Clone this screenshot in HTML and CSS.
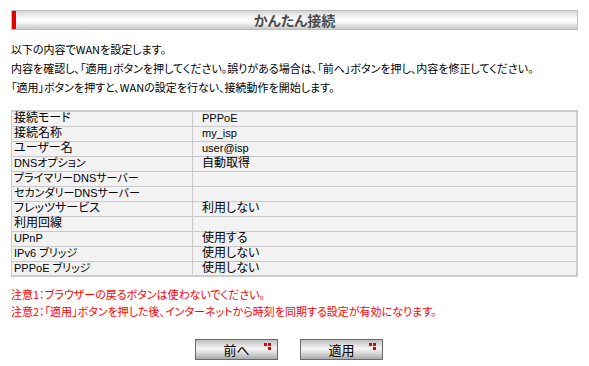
FILE: index.html
```html
<!DOCTYPE html>
<html lang="ja">
<head>
    <meta charset="UTF-8">
    <title>かんたん接続</title>
    <link rel="stylesheet" href="styles.css">
</head>
<body>
    <div class="container">
        <div class="title-bar">
            <span class="title-mark"></span>
            <h1>かんたん接続</h1>
        </div>

        <div class="intro">
            <p>以下の内容でWANを設定します。</p>
            <p>内容を確認し、「適用」ボタンを押してください。誤りがある場合は、「前へ」ボタンを押し、内容を修正してください。</p>
            <p>「適用」ボタンを押すと、WANの設定を行ない、接続動作を開始します。</p>
        </div>

        <table class="settings-table">
            <tbody>
                <tr><td class="name">接続モード</td><td class="value small">PPPoE</td></tr>
                <tr><td class="name">接続名称</td><td class="value small">my_isp</td></tr>
                <tr><td class="name">ユーザー名</td><td class="value small">user@isp</td></tr>
                <tr><td class="name small">DNSオプション</td><td class="value">自動取得</td></tr>
                <tr><td class="name small">プライマリーDNSサーバー</td><td class="value"></td></tr>
                <tr><td class="name small">セカンダリーDNSサーバー</td><td class="value"></td></tr>
                <tr><td class="name">フレッツサービス</td><td class="value">利用しない</td></tr>
                <tr><td class="name">利用回線</td><td class="value"></td></tr>
                <tr><td class="name small">UPnP</td><td class="value">使用する</td></tr>
                <tr><td class="name small">IPv6 ブリッジ</td><td class="value">使用しない</td></tr>
                <tr><td class="name small">PPPoE ブリッジ</td><td class="value">使用しない</td></tr>
            </tbody>
        </table>

        <div class="notes">
            <p>注意1：ブラウザーの戻るボタンは使わないでください。</p>
            <p>注意2：「適用」ボタンを押した後、インターネットから時刻を同期する設定が有効になります。</p>
        </div>

        <div class="button-row">
            <button class="btn">前へ
                <svg class="btn-mark" width="8" height="7" viewBox="0 0 8 7"><rect x="0" y="0" width="3" height="3" fill="#e00000"/><rect x="4" y="0" width="3" height="3" fill="#e00000"/><rect x="4" y="4" width="3" height="3" fill="#e00000"/></svg>
            </button>
            <button class="btn">適用
                <svg class="btn-mark" width="8" height="7" viewBox="0 0 8 7"><rect x="0" y="0" width="3" height="3" fill="#e00000"/><rect x="4" y="0" width="3" height="3" fill="#e00000"/><rect x="4" y="4" width="3" height="3" fill="#e00000"/></svg>
            </button>
        </div>
    </div>
</body>
</html>
```
FILE: styles.css
```css
* {
    margin: 0;
    padding: 0;
    box-sizing: border-box;
}

body {
    font-family: "Noto Sans CJK JP", "Liberation Sans", sans-serif;
    font-size: 11px;
    color: #000;
    background: white;
    font-feature-settings: "palt";
}

.container {
    width: 567px;
    margin-left: 11px;
    padding-top: 10px;
}

.title-bar {
    position: relative;
    height: 20px;
    border: 1px solid #bdbdbd;
    background: linear-gradient(to bottom, #d4d4d4 0%, #e8e8e8 20%, #fdfdfd 45%, #f6f6f6 65%, #dcdcdc 85%, #c9c9c9 100%);
    display: flex;
    align-items: center;
    justify-content: center;
}

.title-mark {
    position: absolute;
    left: 0;
    top: 0;
    width: 4px;
    height: 18px;
    background: #e00000;
}

.title-bar h1 {
    font-size: 14px;
    font-weight: bold;
    color: #4a4a4a;
    line-height: 18px;
}

.intro {
    margin-top: 10px;
    line-height: 19px;
}

.settings-table {
    width: 567px;
    margin-top: 13px;
    border-collapse: collapse;
    border-top: 2px solid #cccccc;
    border-right: 2px solid #cccccc;
    border-bottom: 2px solid #cccccc;
    border-left: 1px solid #cccccc;
    background: #f2f2f2;
}

.settings-table td {
    height: 15px;
    border-bottom: 1px solid #c8c8c8;
    font-family: "Liberation Sans", "Noto Sans CJK JP", sans-serif;
    font-size: 12px;
    line-height: 13px;
    padding: 0;
    vertical-align: middle;
}

.settings-table td.small {
    font-size: 11px;
}

.settings-table .name {
    width: 181px;
    padding-left: 2px;
    border-right: 1px solid #c8c8c8;
}

.settings-table .value {
    padding-left: 9px;
}

.notes {
    margin-top: 9px;
    color: #ff0000;
    line-height: 17px;
}

.button-row {
    display: flex;
    justify-content: center;
    gap: 22px;
    margin-top: 19px;
    padding-right: 11px;
}

.btn {
    position: relative;
    width: 83px;
    height: 21px;
    border: 1px solid #6a6a6a;
    background: linear-gradient(to bottom, #bdbdbd 0%, #dedede 25%, #f4f4f4 45%, #d8d8d8 70%, #a9a9a9 100%);
    font-family: "Noto Sans CJK JP", sans-serif;
    font-size: 13px;
    color: #000;
    line-height: 19px;
}

.btn-mark {
    position: absolute;
    top: 3px;
    right: 5px;
}
```
